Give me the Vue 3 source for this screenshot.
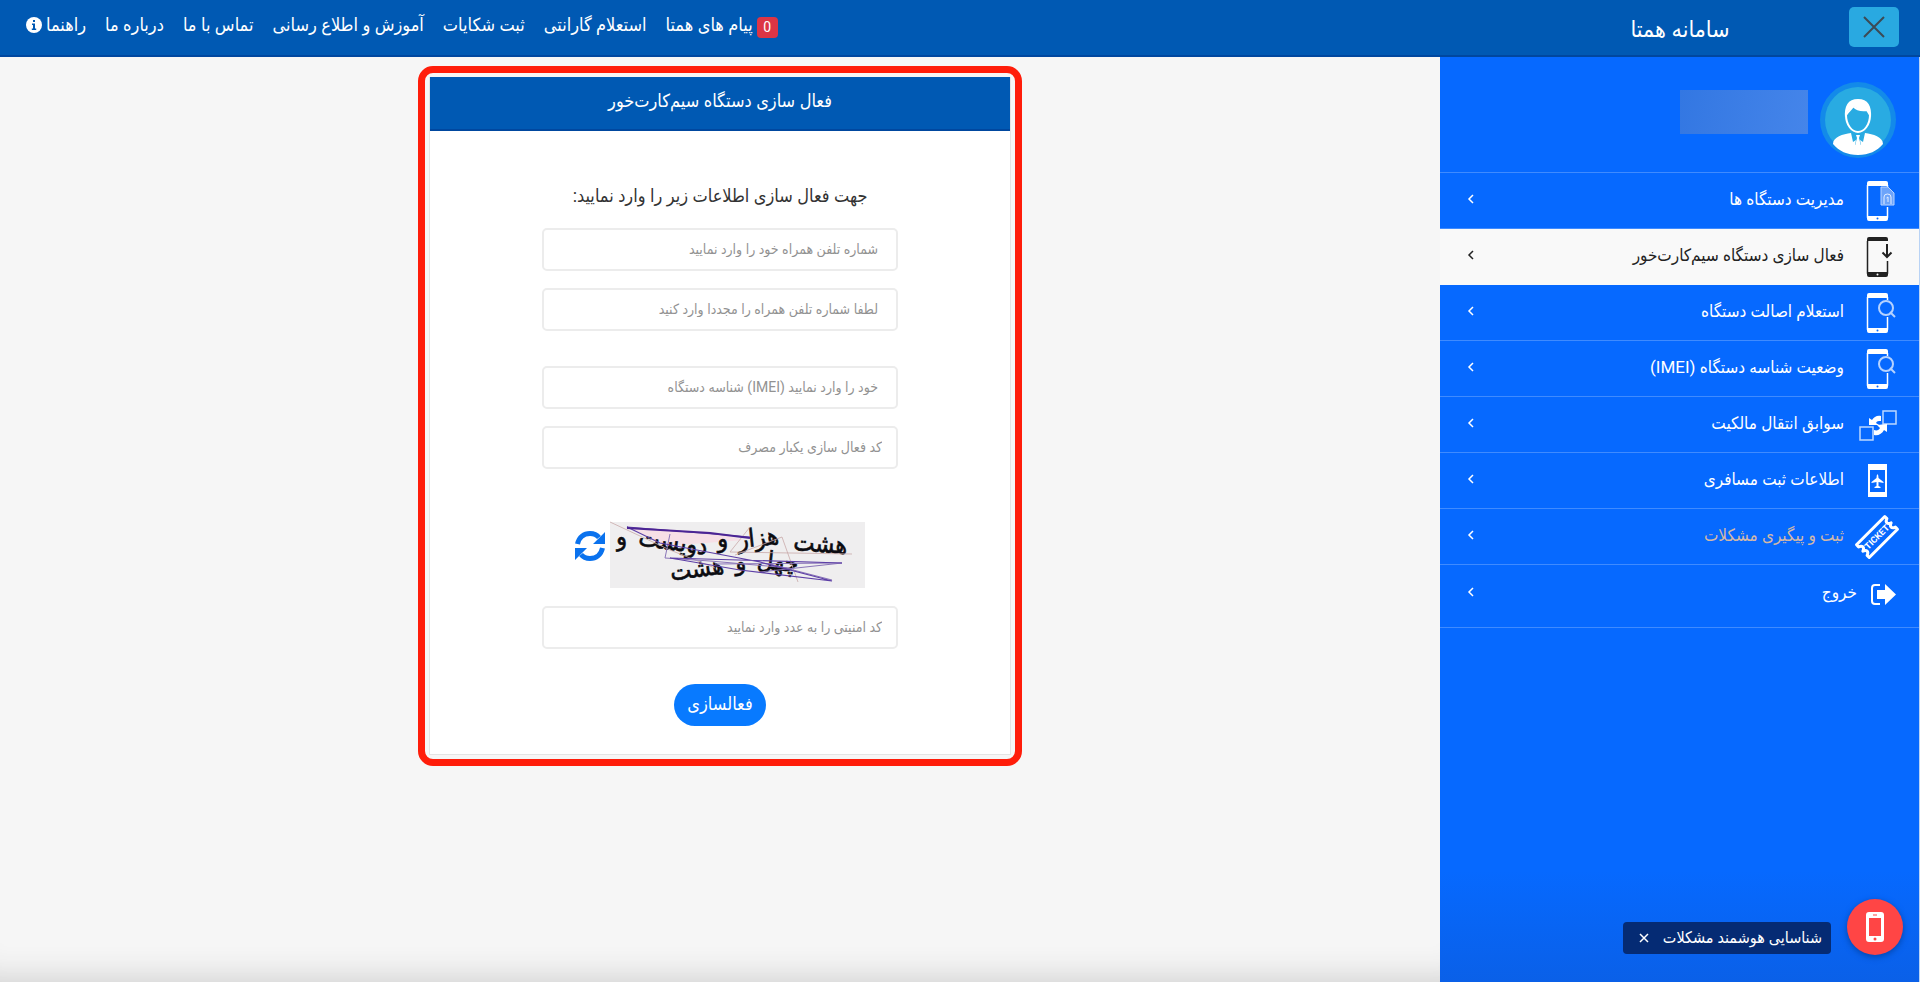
<script setup>
import { ref } from 'vue'

const navLinks = ['استعلام گارانتی', 'ثبت شکایات', 'آموزش و اطلاع رسانی', 'تماس با ما', 'درباره ما']

const menu = [
  { label: 'مدیریت دستگاه ها', icon: 'sim' },
  { label: 'فعال سازی دستگاه سیم‌کارت‌خور', icon: 'download', active: true },
  { label: 'استعلام اصالت دستگاه', icon: 'search' },
  { label: 'وضعیت شناسه دستگاه (IMEI)', icon: 'search' },
  { label: 'سوابق انتقال مالکیت', icon: 'transfer' },
  { label: 'اطلاعات ثبت مسافری', icon: 'plane' },
  { label: 'ثبت و پیگیری مشکلات', icon: 'ticket', warn: true },
  { label: 'خروج', icon: 'exit', last: true }
]

const phone = ref('')
const phoneRepeat = ref('')
const imei = ref('')
const code = ref('')
const captcha = ref('')
</script>

<template>
  <div class="page" dir="rtl">
    <header class="topbar">
      <div class="brand">
        <button class="close" type="button" aria-label="بستن منو">
          <svg width="24" height="24" viewBox="0 0 24 24"><path d="M2 2 22 22M22 2 2 22" fill="none" stroke="#3c4a55" stroke-width="2" /></svg>
        </button>
        <h1>سامانه همتا</h1>
      </div>
      <nav class="nav">
        <a href="#"><span class="badge">0</span>پیام های همتا</a>
        <a v-for="l in navLinks" :key="l" href="#">{{ l }}</a>
        <a href="#">راهنما
          <svg width="16" height="16" viewBox="0 0 16 16"><circle cx="8" cy="8" r="8" fill="#fff" /><path d="M6 6.500h3v5h1.200V13H5.800v-1.500H7V8H6zM7 3h2v2H7z" fill="#0059b3" /></svg>
        </a>
      </nav>
    </header>

    <div class="body">
      <aside class="sidebar">
        <div class="user">
          <svg class="avatar" width="76" height="76" viewBox="0 0 76 76">
            <circle cx="38" cy="38" r="38" fill="#138ae9" />
            <circle cx="38" cy="38" r="33" fill="#29abe2" />
            <path d="M13 62c0-7 10-10 18-11l7 9 7-9c8 1 18 4 18 11-6 7-14 11-25 11s-19-4-25-11z" fill="#fff" />
            <path d="m31 51 7 3 7-3-2 9-3-2 1 5h-6l1-5-3 2z" fill="#29abe2" />
            <path d="M36 53h4l-1 3 2 8h-6l2-8z" fill="#fff" />
            <path d="M26 33c0 10 6 17 12 17s12-7 12-17l-3-5c-6 1-11-1-14-4-1 3-4 4-7 9z" fill="#29abe2" stroke="#fff" stroke-width="2" />
            <path d="M25 36c-1-12 3-19 13-19s14 7 13 19l-3-7c-6 0-11-2-14-5l-6 5z" fill="#fff" />
          </svg>
          <div class="masked"></div>
        </div>

        <nav>
          <a v-for="m in menu" :key="m.label" href="#" class="item" :class="{ active: m.active, warn: m.warn, last: m.last }">
            <span class="icon">
              <svg v-if="m.icon === 'sim'" width="40" height="40" viewBox="0 0 40 40">
                <path d="M10.500 4v32h20V26M30.500 12V4" fill="none" stroke="currentColor" stroke-width="1.500" />
                <path d="M10 2q0-2 2-2h17q2 0 2 2v3H10zM10 35h21v3q0 2-2 2H12q-2 0-2-2z" fill="currentColor" />
                <circle cx="20.500" cy="37.500" r="1" fill="#0669ff" />
                <path d="M24 6h7l6 6v12H24z" fill="#6da4fa" stroke="#b9d4ff" />
                <path d="M27 23v-7q0-3 3.500-3t3.500 3v7M31 16v5M29.500 17l1.500-1" fill="none" stroke="#e3eeff" stroke-width="1" />
              </svg>
              <svg v-else-if="m.icon === 'download'" width="40" height="40" viewBox="0 0 40 40">
                <path d="M10.500 4v32h20V24" fill="none" stroke="currentColor" stroke-width="1.500" />
                <path d="M10 2q0-2 2-2h17q2 0 2 2v2H10zM10 35h21v3q0 2-2 2H12q-2 0-2-2z" fill="currentColor" />
                <circle cx="20.500" cy="37.500" r="1" fill="#fff" />
                <path d="M30 7v13M25.500 15.500 30 20l4.500-4.500" fill="none" stroke="currentColor" stroke-width="2" />
              </svg>
              <svg v-else-if="m.icon === 'search'" width="40" height="40" viewBox="0 0 40 40">
                <path d="M10.500 4v32h20V24M30.500 7V4" fill="none" stroke="currentColor" stroke-width="1.500" />
                <path d="M10 2q0-2 2-2h17q2 0 2 2v3H10zM10 35h21v3q0 2-2 2H12q-2 0-2-2z" fill="currentColor" />
                <circle cx="20.500" cy="37.500" r="1" fill="#0669ff" />
                <circle cx="29" cy="15" r="7" fill="#0669ff" stroke="#b5d2ff" stroke-width="2" />
                <path d="m33 19 5 5" stroke="#b5d2ff" stroke-width="2" />
              </svg>
              <svg v-else-if="m.icon === 'transfer'" width="40" height="40" viewBox="0 0 40 40">
                <path d="M26 6h13v13H26zM3 22h13v13H3z" fill="none" stroke="#bcd7ff" stroke-width="1.500" />
                <path d="M12 20v-7l3 2c2-3 5-5 9-4v5c-3 0-4 0-5 2l3 2zM30 19v8l-3-2c-2 4-6 6-10 5v-5c3 1 5 0 6-2l-3-3z" fill="currentColor" />
              </svg>
              <svg v-else-if="m.icon === 'plane'" width="40" height="40" viewBox="0 0 40 40">
                <path d="M12 5h17v29H12z" fill="none" stroke="currentColor" stroke-width="2" />
                <path d="M11 3h19v6H11zM11 31h19v5H11z" fill="currentColor" />
                <path d="M20.500 13q1 1 1 4l5 4v1l-5-1v4l2 1v1h-6v-1l2-1v-4l-5 1v-1l5-4q0-3 1-4z" fill="currentColor" />
              </svg>
              <svg v-else-if="m.icon === 'ticket'" width="40" height="40" viewBox="0 0 40 40">
                <g transform="rotate(-45 20 20)">
                  <path d="M0 11H40V14q-3 1-3 3t3 3q-3 1-3 3t3 3V29H0V26q3-1 3-3t-3-3q3-1 3-3t-3-3z" fill="none" stroke="currentColor" stroke-width="3" stroke-linejoin="round" />
                  <text x="20" y="23" text-anchor="middle" font-size="9" font-weight="700" fill="currentColor" direction="ltr">TICKET</text>
                </g>
              </svg>
              <svg v-else width="40" height="40" viewBox="0 0 40 40">
                <path d="M23 11h-5q-3 0-3 3v13q0 3 3 3h5" fill="none" stroke="currentColor" stroke-width="2" />
                <path d="M20 16h8v-6l11 10.500L28 31v-6h-8z" fill="currentColor" />
              </svg>
            </span>
            <span class="label">{{ m.label }}</span>
            <svg class="chev" width="8" height="10" viewBox="0 0 8 10"><path d="M6 1 2 5l4 4" fill="none" stroke="currentColor" stroke-width="1.500" /></svg>
          </a>
        </nav>
      </aside>

      <main class="main">
        <div class="frame">
          <section class="card">
            <h2>فعال سازی دستگاه سیم‌کارت‌خور</h2>
            <form class="form" @submit.prevent>
              <p>جهت فعال سازی اطلاعات زیر را وارد نمایید:</p>
              <div class="pair">
                <input v-model="phone" type="tel" aria-label="شماره تلفن همراه" placeholder="شماره تلفن همراه خود را وارد نمایید">
                <input v-model="phoneRepeat" type="tel" aria-label="تکرار شماره تلفن همراه" placeholder="لطفا شماره تلفن همراه را مجددا وارد کنید">
              </div>
              <div class="pair">
                <input v-model="imei" type="text" aria-label="شناسه دستگاه" placeholder="خود را وارد نمایید (IMEI) شناسه دستگاه">
                <input v-model="code" class="code" type="text" aria-label="کد فعال سازی" placeholder="کد فعال سازی یکبار مصرف">
              </div>
              <div class="captcha">
                <svg class="challenge" width="255" height="66" viewBox="0 0 255 66" font-size="25" text-anchor="middle">
                  <rect width="255" height="66" fill="#efeeef" />
                  <path d="M18 5 55 24 135 18 100 10z" fill="#f6dfe6" />
                  <g fill="#0b0b10" stroke="#0b0b10" stroke-width=".6">
                    <text transform="translate(210 30) rotate(4)">هشت</text>
                    <text transform="translate(149 24) rotate(-6)">هزار</text>
                    <text transform="translate(113 25) rotate(-3)">و</text>
                    <text transform="translate(62 28) rotate(8)">دویست</text>
                    <text transform="translate(12 23) rotate(-6)">و</text>
                    <text transform="translate(167 48) rotate(6)">چهل</text>
                    <text transform="translate(131 48)">و</text>
                    <text transform="translate(88 55) rotate(-8)">هشت</text>
                  </g>
                  <g fill="none">
                    <path d="M0 0 60 28 105 46M140 5 120 30 242 32M125 33 172 15 188 60" stroke="#c9a9a9" stroke-width=".8" />
                    <path d="M60 12 55 36 100 39 180 46M105 42 232 41 150 50M160 42 222 58" stroke="#8a75b8" stroke-width="1" />
                    <path d="M17 5 140 15M17 5 50 21 150 40 222 59 130 48 60 36 232 41" stroke="#5d3fa6" stroke-width="1.200" />
                    <path d="M17 6 100 11 140 16" stroke="#4b2494" stroke-width="2" />
                  </g>
                </svg>
                <button class="refresh" type="button" aria-label="کد جدید">
                  <svg width="30" height="32" viewBox="0 0 30 32">
                    <path d="M2.500 14C4 7 9 3.500 15 3.500c4 0 7 1.500 9 4M27.500 18c-1.500 7-6.500 10.500-12.500 10.500-4 0-7-1.500-9-4" fill="none" stroke="#0a72ee" stroke-width="5" />
                    <path d="M30 2v12H18zM0 30V18h12z" fill="#0a72ee" />
                  </svg>
                </button>
              </div>
              <input v-model="captcha" class="code" type="text" aria-label="کد امنیتی" placeholder="کد امنیتی را به عدد وارد نمایید">
              <button class="submit" type="submit">فعالسازی</button>
            </form>
          </section>
        </div>
      </main>
    </div>

    <div class="helper">
      <button class="fab" type="button" aria-label="شناسایی هوشمند مشکلات">
        <svg width="20" height="30" viewBox="0 0 20 30"><path d="M4 0h12q3 0 3 3v24q0 3-3 3H4q-3 0-3-3V3q0-3 3-3zM4 6v18h12V6z" fill="#fff" fill-rule="evenodd" /><path d="M8 3h4" stroke="#ff4545" stroke-width="1" /><circle cx="10" cy="27" r="1.500" fill="#ff4545" /></svg>
      </button>
      <div class="tip">
        <span>شناسایی هوشمند مشکلات</span>
        <button type="button" aria-label="بستن"><svg width="8" height="8" viewBox="0 0 8 8"><path d="M0 0 8 8M8 0 0 8" stroke="#fff" stroke-width="1.500" /></svg></button>
      </div>
    </div>
  </div>
</template>

<style>
html, body { background: #f6f6f6; }
</style>

<style scoped>
* { box-sizing: border-box; }
.page {
  min-height: 100vh;
  display: flex;
  flex-direction: column;
  font-family: Roboto, "DejaVu Sans Condensed", "DejaVu Sans", sans-serif;
  font-size: 18px;
  color: #333;
}
a { color: inherit; text-decoration: none; }
button { font: inherit; border: 0; padding: 0; background: none; cursor: pointer; }
h1, h2, p { margin: 0; font-weight: 400; }
svg { display: block; flex: none; overflow: visible; }

.topbar {
  display: flex;
  height: 57px;
  background: #0059b3;
  border-bottom: 2px solid #00479f;
  color: #fff;
}
.brand {
  width: 25%;
  display: grid;
  grid-template-columns: 72px 1fr 72px;
  align-items: start;
}
.close {
  width: 50px;
  height: 40px;
  margin: 7px 21px 0 0;
  display: grid;
  place-items: center;
  background: #29a9e1;
  border-radius: 5px;
}
.brand h1 { font-size: 23px; line-height: 60px; text-align: center; }
.nav {
  flex: 1;
  display: flex;
  justify-content: flex-end;
  gap: 19px;
  padding-left: 26px;
  line-height: 50px;
}
.nav a { display: flex; align-items: center; gap: 4px; height: 50px; white-space: nowrap; }
.badge {
  width: 21px;
  height: 21px;
  line-height: 21px;
  margin-top: 4px;
  border-radius: 4px;
  background: #dc3545;
  font-size: 14px;
  text-align: center;
}

.body { flex: 1; display: flex; }
.sidebar {
  width: 25%;
  background: linear-gradient(#0669ff, #0669ff 88%, #0a60e8);
  border-right: 1px solid #b9d3f5;
  color: #fff;
}
.user {
  height: 116px;
  display: flex;
  align-items: flex-start;
  gap: 12px;
  padding: 25px 23px 0 0;
  border-bottom: 1px solid #3f8bff;
}
.masked {
  width: 128px;
  height: 44px;
  margin-top: 8px;
  background: linear-gradient(100deg, #3377e2, #4585ea);
}
.item {
  display: flex;
  align-items: center;
  height: 56px;
  padding: 0 22px 4px 27px;
  border-bottom: 1px solid #3f8bff;
  font-size: 17px;
  line-height: 24px;
  white-space: nowrap;
}
.icon { width: 40px; margin-left: 13px; padding-top: 4px; }
.label { flex: 1; }
.item.active { background: #f9f9f9; color: #222; border-color: #f9f9f9; }
.item.warn .label { color: #d3b8a8; }
.item.last { height: 63px; padding-bottom: 8px; }
.item.last .icon { margin-left: 0; }

.main {
  flex: 1;
  padding: 9px 0 40px;
  background: #f6f6f6;
  box-shadow: inset 0 -36px 32px -32px #cfcfcf;
}
.frame {
  width: 42%;
  min-width: 520px;
  margin: 0 auto;
  padding: 4px;
  border: 7px solid #ff1d0a;
  border-radius: 15px;
}
.card { background: #fff; border: 1px solid #e4e4e4; border-top: 0; }
.card h2 {
  height: 54px;
  line-height: 48px;
  background: #0059b3;
  border-bottom: 2px solid #00479f;
  color: #fff;
  font-size: 18px;
  text-align: center;
}
.form {
  width: 356px;
  margin: 0 auto;
  padding: 50px 0 28px;
  display: flex;
  flex-direction: column;
}
.form p { font-size: 18px; line-height: 30px; text-align: center; margin-bottom: 17px; }
.pair { display: grid; gap: 17px; margin-bottom: 35px; }
input {
  width: 100%;
  height: 43px;
  padding: 0 18px 2px;
  border: 2px solid #ececec;
  border-radius: 5px;
  background: #fff;
  font: inherit;
  font-size: 14px;
  color: #444;
  outline: none;
  text-align: right;
  direction: rtl;
}
input.code { padding: 0 14px 2px; }
input::placeholder { color: #929292; opacity: 1; }
.captcha { display: flex; align-items: flex-start; gap: 5px; padding: 18px 33px 18px 0; }
.refresh { margin-top: 8px; }
.submit {
  align-self: center;
  width: 92px;
  height: 42px;
  margin-top: 35px;
  padding-bottom: 4px;
  border-radius: 21px;
  background: #087aff;
  color: #fff;
}

.helper {
  position: fixed;
  right: 17px;
  bottom: 27px;
  display: flex;
  align-items: flex-end;
  gap: 16px;
  color: #fff;
}
.fab {
  width: 56px;
  height: 56px;
  display: grid;
  place-items: center;
  border-radius: 50%;
  background: #ff4545;
  box-shadow: 0 2px 6px #0346ad;
}
.tip {
  display: flex;
  align-items: center;
  gap: 15px;
  height: 32px;
  margin-bottom: 1px;
  padding: 0 9px 0 17px;
  border-radius: 4px;
  background: #052b74;
  font-size: 16px;
  line-height: 28px;
  white-space: nowrap;
}
</style>
